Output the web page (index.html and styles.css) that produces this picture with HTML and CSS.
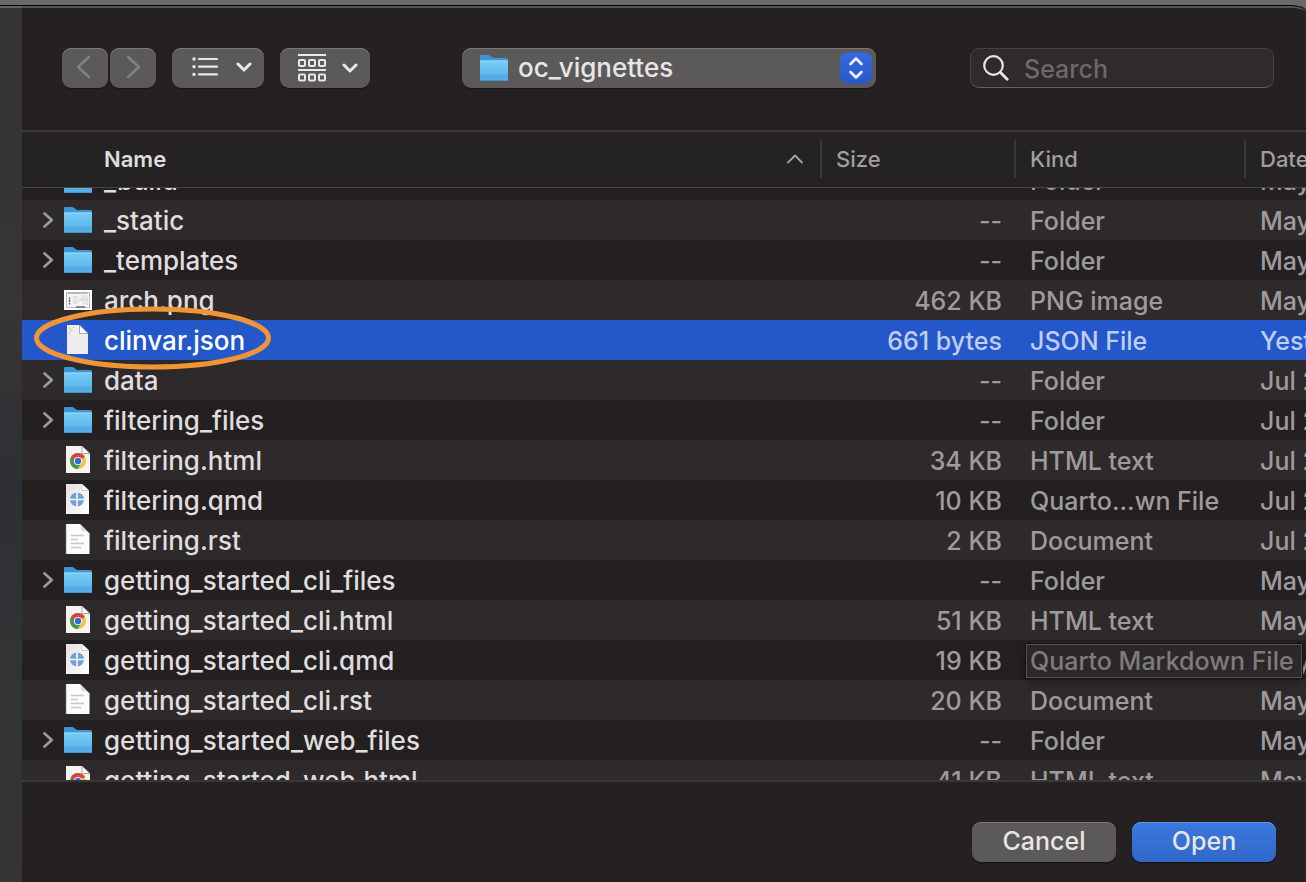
FILE: index.html
```html
<!DOCTYPE html>
<html lang="en">
<head>
<meta charset="utf-8">
<title>Open file</title>
<link rel="stylesheet" href="styles.css">
</head>
<body>
<svg class="defs" width="0" height="0" aria-hidden="true">
  <defs>
    <linearGradient id="g-front" x1="0" y1="0" x2="0" y2="1">
      <stop offset="0" stop-color="#7accf8"/><stop offset="1" stop-color="#53aee6"/>
    </linearGradient>
    <linearGradient id="g-page" x1="0" y1="0" x2="1" y2="1">
      <stop offset="0" stop-color="#e2e2e2"/><stop offset="1" stop-color="#ffffff"/>
    </linearGradient>
  </defs>
  <symbol id="i-folder" viewBox="0 0 28 28">
    <path d="M0 2.200Q0 1 1.200 1H8q1.200 0 2 .7l2 1.600q.8.7 2 .7h12.600q1.200 0 1.200 1.200V12H0Z" fill="#3f95d0"/>
    <path d="M0 7.500Q0 6.500 1 6.500H27q1 0 1 1V26q0 1-1 1H1q-1 0-1-1Z" fill="url(#g-front)"/>
    <path d="M0 7H28" stroke="#8fd8fc" stroke-width="1"/>
    <path d="M0 21.500H28M0 23.500H28" stroke="#4a9fd9" stroke-width=".7"/>
    <path d="M0 26.500H28" stroke="#3f97d3" stroke-width="1"/>
  </symbol>
  <symbol id="i-png" viewBox="0 0 28 28">
    <path d="M0 4H28V24H0Z" fill="#fff"/>
    <path d="M2.500 6.500H25.500V21.500H2.500Z" fill="#f4f4f4" stroke="#aaa" stroke-width=".8"/>
    <path d="M4 7.300H24" stroke="#888" stroke-width=".8" stroke-dasharray="2 .5"/>
    <path d="M5.500 11.500v7" stroke="#555" stroke-width="1.200" stroke-dasharray="2 .6"/>
    <path d="M9 11h5M9 13h4M9 15h6M9 17h5M17 10h4M17 12h5M18 17h4" stroke="#c6c6c6" stroke-width=".7"/>
    <path d="M15 14h8" stroke="#a5c2e4" stroke-width=".8"/>
    <path d="M12 21h9" stroke="#456" stroke-width="1.200"/>
    <path d="M23 9v10" stroke="#ccc" stroke-width=".8"/>
  </symbol>
  <symbol id="i-json" viewBox="0 0 28 32">
    <path d="M3 2H15.500L24 10.500V31H3Z" fill="#eeedef"/>
    <path d="M15.500 2V10.500H24Z" fill="#fff" stroke="#999" stroke-width=".8"/>
    <path d="M4 4l3.500 3-2.500 3M9 4.500h1M8 7h1M5 11.500h1" stroke="#c8c8c8" stroke-width="1" fill="none"/>
  </symbol>
  <symbol id="i-chrome" viewBox="0 0 28 32">
    <path d="M2 3H18L26 11V30H2Z" fill="#f4f4f4"/>
    <path d="M18 3V10.500H26Z" fill="#fff" stroke="#8e8e8e" stroke-width=".8"/>
    <circle cx="14" cy="18" r="8" fill="#f6c344"/>
    <path d="M14 18L7.070 14A8 8 0 0 1 20.930 14Z" fill="#d94636"/>
    <path d="M14 18L7.070 14A8 8 0 0 0 13.500 26L17.500 20Z" fill="#3f9a50"/>
    <path d="M7.070 14L10.500 20L14 14.500Z" fill="#d94636"/>
    <circle cx="14" cy="18" r="4.100" fill="#fff"/>
    <circle cx="14" cy="18" r="3.200" fill="#2d6be0"/>
  </symbol>
  <symbol id="i-qmd" viewBox="0 0 28 32">
    <path d="M2 1H18L25 7.500V31H2Z" fill="url(#g-page)"/>
    <path d="M18 1V7.500H25Z" fill="#fff" stroke="#aaa" stroke-width=".5"/>
    <circle cx="13" cy="16.500" r="7" fill="#74a0d8"/>
    <path d="M13 9V24M5.500 16.500H20.500" stroke="#f7f7f7" stroke-width="1.600"/>
  </symbol>
  <symbol id="i-doc" viewBox="0 0 28 32">
    <path d="M2 1H16L25.500 10.500V31H2Z" fill="#fcfcfc"/>
    <path d="M14.500 1Q17.500 2 17 7.500Q22 8 25.500 10.500L16 1Z" fill="#dedede"/>
    <path d="M2.300 1V31" stroke="#c4c4c4" stroke-width=".8"/>
    <path d="M7 12.500H20M7 16.500H14M7 20.500H20M7 24.500H17" stroke="#c6c6c6" stroke-width="1.600"/>
  </symbol>
  <symbol id="i-disclose" viewBox="0 0 12 18">
    <path d="M2.500 2.500L9.800 9L2.500 15.500" fill="none" stroke="#9c9a9b" stroke-width="2.700" stroke-linecap="round" stroke-linejoin="round"/>
  </symbol>
  <symbol id="i-down" viewBox="0 0 16 10">
    <path d="M2 2L8 8L14 2" fill="none" stroke="#e8e8e8" stroke-width="3" stroke-linecap="round" stroke-linejoin="round"/>
  </symbol>
</svg>

<main class="window">
  <div class="sidebar"></div>
  <section class="panel">
    <header class="toolbar">
      <div class="nav">
        <button class="btn btn-nav btn-back" type="button" disabled aria-label="Back">
          <svg width="16" height="24" viewBox="0 0 16 24"><path d="M14 2L3 12L14 22" fill="none" stroke="#838281" stroke-width="2.400" stroke-linecap="round" stroke-linejoin="round"/></svg>
        </button>
        <button class="btn btn-nav" type="button" disabled aria-label="Forward">
          <svg width="16" height="24" viewBox="0 0 16 24"><path d="M3 2L14 12L3 22" fill="none" stroke="#838281" stroke-width="2.400" stroke-linecap="round" stroke-linejoin="round"/></svg>
        </button>
      </div>
      <button class="btn btn-view" type="button" aria-label="View as list">
        <svg width="28" height="20" viewBox="0 0 28 20"><g stroke="#e8e8e8" stroke-width="2.200" stroke-linecap="round"><path d="M7 2H25M7 9.700H25M7 17.400H25"/></g><g fill="#e8e8e8"><circle cx="2" cy="2" r="1.700"/><circle cx="2" cy="9.700" r="1.700"/><circle cx="2" cy="17.400" r="1.700"/></g></svg>
        <svg width="16" height="10"><use href="#i-down"/></svg>
      </button>
      <button class="btn btn-view" type="button" aria-label="Group items">
        <svg width="28" height="28" viewBox="0 0 28 28"><g fill="none" stroke="#e8e8e8" stroke-width="2"><path d="M0 1H28M0 16H28"/><rect x="1" y="6" width="6" height="6" rx="1"/><rect x="11" y="6" width="6" height="6" rx="1"/><rect x="21" y="6" width="6" height="6" rx="1"/><rect x="1" y="20.500" width="6" height="6" rx="1"/><rect x="11" y="20.500" width="6" height="6" rx="1"/><rect x="21" y="20.500" width="6" height="6" rx="1"/></g></svg>
        <svg width="16" height="10"><use href="#i-down"/></svg>
      </button>
      <div class="location">
        <svg class="location-icon" width="28" height="28"><use href="#i-folder"/></svg>
        <select class="location-select" aria-label="Folder"><option>oc_vignettes</option></select>
        <span class="stepper"><svg width="16" height="24" viewBox="0 0 16 24"><path d="M2.500 8L8 2.500L13.500 8M2.500 16L8 21.500L13.500 16" fill="none" stroke="#e9eefb" stroke-width="2.800" stroke-linecap="round" stroke-linejoin="round"/></svg></span>
      </div>
      <label class="search">
        <svg width="26" height="26" viewBox="0 0 26 26"><circle cx="10.500" cy="10.500" r="9.300" fill="none" stroke="#e6e6e6" stroke-width="2.200"/><path d="M17.500 17.500L24.200 24.200" stroke="#e6e6e6" stroke-width="2.800" stroke-linecap="round"/></svg>
        <input class="search-input" type="text" placeholder="Search" aria-label="Search">
      </label>
    </header>

    <div class="list" id="list">
      <table class="files">
        <thead>
          <tr>
            <th class="col-name" scope="col"><div class="head-name">Name<svg width="18" height="10" viewBox="0 0 18 10"><path d="M2 8.500L9 1.500L16 8.500" fill="none" stroke="#a5a3a4" stroke-width="1.800" stroke-linecap="round" stroke-linejoin="round"/></svg></div></th>
            <th class="col-size" scope="col"><div class="head-cell">Size</div></th>
            <th class="col-kind" scope="col"><div class="head-cell">Kind</div></th>
            <th class="col-date" scope="col"><div class="head-cell">Date</div></th>
          </tr>
        </thead>
        <tbody>
          <tr><td><div class="name"><button class="disclose" type="button" aria-label="Expand _build"><svg><use href="#i-disclose"/></svg></button><svg class="icon"><use href="#i-folder"/></svg><span>_build</span></div></td><td class="size">--</td><td>Folder</td><td>May</td></tr>
          <tr><td><div class="name"><button class="disclose" type="button" aria-label="Expand _static"><svg><use href="#i-disclose"/></svg></button><svg class="icon"><use href="#i-folder"/></svg><span>_static</span></div></td><td class="size">--</td><td>Folder</td><td>May</td></tr>
          <tr><td><div class="name"><button class="disclose" type="button" aria-label="Expand _templates"><svg><use href="#i-disclose"/></svg></button><svg class="icon"><use href="#i-folder"/></svg><span>_templates</span></div></td><td class="size">--</td><td>Folder</td><td>May</td></tr>
          <tr><td><div class="name file"><svg class="icon"><use href="#i-png"/></svg><span>arch.png</span></div></td><td class="size">462 KB</td><td>PNG image</td><td>May</td></tr>
          <tr class="selected"><td><div class="name file"><svg class="icon page"><use href="#i-json"/></svg><span>clinvar.json</span></div><svg class="ring" viewBox="0 0 238 64" aria-hidden="true"><ellipse cx="118.500" cy="32" rx="116" ry="29" fill="none" stroke="#ef9537" stroke-width="5"/></svg></td><td class="size">661 bytes</td><td>JSON File</td><td>Yesterday</td></tr>
          <tr><td><div class="name"><button class="disclose" type="button" aria-label="Expand data"><svg><use href="#i-disclose"/></svg></button><svg class="icon"><use href="#i-folder"/></svg><span>data</span></div></td><td class="size">--</td><td>Folder</td><td>Jul 2</td></tr>
          <tr><td><div class="name"><button class="disclose" type="button" aria-label="Expand filtering_files"><svg><use href="#i-disclose"/></svg></button><svg class="icon"><use href="#i-folder"/></svg><span>filtering_files</span></div></td><td class="size">--</td><td>Folder</td><td>Jul 2</td></tr>
          <tr><td><div class="name file"><svg class="icon page"><use href="#i-chrome"/></svg><span>filtering.html</span></div></td><td class="size">34 KB</td><td>HTML text</td><td>Jul 2</td></tr>
          <tr><td><div class="name file"><svg class="icon page"><use href="#i-qmd"/></svg><span>filtering.qmd</span></div></td><td class="size">10 KB</td><td>Quarto...wn File</td><td>Jul 2</td></tr>
          <tr><td><div class="name file"><svg class="icon page"><use href="#i-doc"/></svg><span>filtering.rst</span></div></td><td class="size">2 KB</td><td>Document</td><td>Jul 2</td></tr>
          <tr><td><div class="name"><button class="disclose" type="button" aria-label="Expand getting_started_cli_files"><svg><use href="#i-disclose"/></svg></button><svg class="icon"><use href="#i-folder"/></svg><span>getting_started_cli_files</span></div></td><td class="size">--</td><td>Folder</td><td>May</td></tr>
          <tr><td><div class="name file"><svg class="icon page"><use href="#i-chrome"/></svg><span>getting_started_cli.html</span></div></td><td class="size">51 KB</td><td>HTML text</td><td>May</td></tr>
          <tr><td><div class="name file"><svg class="icon page"><use href="#i-qmd"/></svg><span>getting_started_cli.qmd</span></div></td><td class="size">19 KB</td><td class="has-tip"><span class="tip" role="tooltip">Quarto Markdown File</span></td><td>May</td></tr>
          <tr><td><div class="name file"><svg class="icon page"><use href="#i-doc"/></svg><span>getting_started_cli.rst</span></div></td><td class="size">20 KB</td><td>Document</td><td>May</td></tr>
          <tr><td><div class="name"><button class="disclose" type="button" aria-label="Expand getting_started_web_files"><svg><use href="#i-disclose"/></svg></button><svg class="icon"><use href="#i-folder"/></svg><span>getting_started_web_files</span></div></td><td class="size">--</td><td>Folder</td><td>May</td></tr>
          <tr><td><div class="name file"><svg class="icon page"><use href="#i-chrome"/></svg><span>getting_started_web.html</span></div></td><td class="size">41 KB</td><td>HTML text</td><td>May</td></tr>
        </tbody>
      </table>
    </div>

    <footer class="actions">
      <button class="btn btn-action" type="button">Cancel</button>
      <button class="btn btn-action btn-primary" type="button">Open</button>
    </footer>
  </section>
</main>
<script src="list.js"></script>
</body>
</html>
```
FILE: styles.css
```css
* { box-sizing: border-box; }

body {
  margin: 0;
  height: 100vh;
  padding-top: 5px;
  overflow: hidden;
  background: #696969;
  color: #dfdddd;
  font: 450 25px/40px Inter, "Liberation Sans", sans-serif;
}

button, select, input { font: inherit; color: inherit; margin: 0; }
svg { display: block; flex: none; }
.defs { position: absolute; }

.window {
  display: flex;
  height: 100%;
  border-top: 1px solid #000;
  border-top-right-radius: 16px 6px;
  background: #252122;
  overflow: hidden;
}
.sidebar {
  width: 22px;
  flex: none;
  border-top: 2px solid #626262;
  background: linear-gradient(#353535, #373535 35%, #2d2f34 55%, #323334 75%, #343434);
}
.panel {
  flex: 1;
  min-width: 0;
  display: flex;
  flex-direction: column;
  border-top: 2px solid #555354;
  border-top-right-radius: 16px 6px;
}

/* Toolbar */
.toolbar {
  display: flex;
  align-items: center;
  flex: none;
  height: 124px;
  padding: 0 32px 2px 40px;
  border-bottom: 2px solid #3a3738;
}
.btn {
  display: flex;
  align-items: center;
  justify-content: center;
  height: 40px;
  padding: 0;
  border: 0;
  border-radius: 9px;
  background: #5b5a59;
  box-shadow: inset 0 1px #7a7978, 0 1px 1px #151313;
}
.nav { display: flex; gap: 2px; }
.btn-nav { width: 46px; padding-bottom: 2px; }
.btn-back { padding-right: 4px; }
.btn-view { justify-content: space-between; width: 92px; margin-left: 16px; padding: 0 12px 2px 20px; }
.btn-view + .btn-view { width: 90px; padding: 0 12px 0 18px; }
.location {
  position: relative;
  display: flex;
  align-items: center;
  width: 414px;
  height: 40px;
  margin-left: 92px;
  border-radius: 9px;
  background: #5b5a59;
  box-shadow: inset 0 1px #7a7978, 0 1px 1px #151313;
}
.location-icon { position: absolute; left: 18px; pointer-events: none; }
.location-select {
  appearance: none;
  width: 100%;
  height: 40px;
  padding: 0 44px 3px 56px;
  border: 0;
  background: none;
  color: #e8e6e6;
  font-size: 26px;
}
.stepper {
  position: absolute;
  right: 4px;
  display: flex;
  align-items: center;
  justify-content: center;
  width: 32px;
  height: 32px;
  border-radius: 8px;
  background: linear-gradient(#356ade, #2759c6);
  pointer-events: none;
}
.search {
  display: flex;
  align-items: center;
  gap: 15px;
  width: 304px;
  height: 40px;
  margin-left: auto;
  padding: 0 12px;
  border: 1px solid #454243;
  border-bottom-color: #656263;
  border-radius: 9px;
  background: #2f2b2c;
}
.search-input {
  flex: 1;
  min-width: 0;
  height: 38px;
  padding: 2px 0 0;
  border: 0;
  outline: 0;
  background: none;
}
.search-input::placeholder { color: #6b696a; opacity: 1; }

/* File list */
.list { flex: 1; min-height: 0; overflow: hidden; }
.files {
  width: 100%;
  table-layout: fixed;
  border-collapse: separate;
  border-spacing: 0;
}
th {
  position: sticky;
  top: 0;
  z-index: 3;
  height: 56px;
  padding: 0 0 2px;
  border-bottom: 1px solid #454344;
  background: #242223;
  color: #a09e9f;
  font-size: 22px;
  font-weight: 500;
  line-height: 38px;
  text-align: left;
}
.col-size { width: 194px; }
.col-kind { width: 230px; }
.col-date { width: 62px; }
.head-name {
  display: flex;
  align-items: center;
  justify-content: space-between;
  padding: 0 16px 0 82px;
  color: #dfdddd;
  font-weight: 600;
}
.head-cell { padding-left: 14px; border-left: 2px solid #3a3738; overflow: hidden; }
td {
  height: 40px;
  padding: 2px 0 0 16px;
  color: #9d9b9c;
  line-height: 38px;
  white-space: nowrap;
  overflow: hidden;
}
td:first-child { position: relative; padding: 0; color: #dfdddd; overflow: visible; }
tbody tr { background: #242021; }
tbody tr:nth-child(even) { background: #2e2a2b; }
tbody .size { padding: 2px 12px 0 0; text-align: right; }
tbody tr.selected { background: #2457c9; }
tbody .selected td { color: #bfcdf0; }
tbody .selected td:first-child { color: #fff; }
tbody tr.selected + tr { background: #2e2a2b; }

.name { display: flex; align-items: center; height: 40px; padding-left: 20px; font-size: 26px; }
.name.file { padding-left: 42px; }
.name span { margin-left: 12px; padding-top: 2px; }
.disclose { width: 12px; height: 18px; margin-right: 10px; padding: 0; border: 0; background: none; }
.disclose svg { width: 12px; height: 18px; }
.icon { width: 28px; height: 28px; }
.icon.page { height: 32px; margin-bottom: 2px; }
.ring {
  position: absolute;
  z-index: 2;
  top: -14px;
  left: 12px;
  width: 238px;
  height: 64px;
  pointer-events: none;
}
.has-tip { position: relative; overflow: visible; z-index: 1; }
.tip {
  position: absolute;
  top: 4px;
  left: 12px;
  padding: 0 7px 0 3px;
  border: 1px solid #555253;
  outline: 1px solid #151313;
  background: #2c2829;
  box-shadow: 0 4px 12px #00000055;
  color: #7e7b7c;
  line-height: 32px;
}

/* Footer */
.actions {
  display: flex;
  align-items: center;
  justify-content: flex-end;
  gap: 16px;
  flex: none;
  height: 102px;
  padding: 20px 30px 0 0;
  border-top: 2px solid #3a3738;
}
.btn-action { width: 144px; padding-bottom: 2px; color: #e8e6e6; }
.btn-primary { background: linear-gradient(#3a78de, #3068c8); box-shadow: inset 0 1px #6696e6, 0 1px 1px #151313; }
```
FILE: list.js
```js
// Open the list slightly scrolled, under its fixed header.
document.getElementById("list").scrollTop = 28;
```
